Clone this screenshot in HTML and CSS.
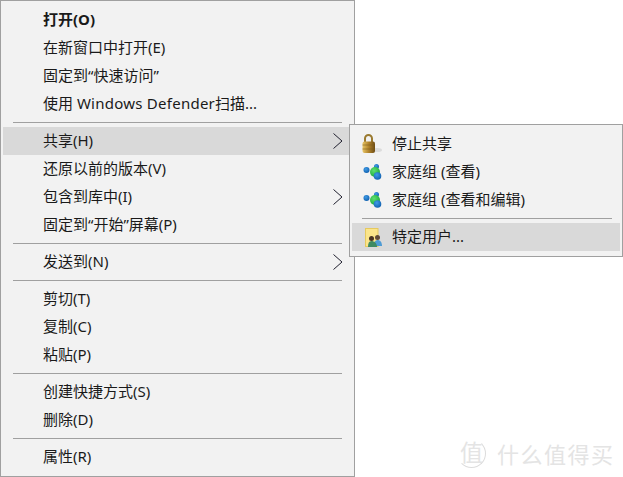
FILE: index.html
```html
<!DOCTYPE html>
<html lang="zh-CN">
<head>
    <meta charset="UTF-8">
    <title>右键菜单</title>
    <link rel="stylesheet" href="styles.css">
</head>
<body>
    <div class="menu">
        <div class="item bold">打开(O)</div>
        <div class="item">在新窗口中打开(E)</div>
        <div class="item">固定到“快速访问”</div>
        <div class="item">使用 <span class="latin">Windows Defender</span>扫描...</div>
        <div class="sep"></div>
        <div class="item active">共享(H)
            <svg class="arrow" viewBox="0 0 10 16"><path d="M.5 .5L9 8 .5 15.500" fill="none" stroke="#1f1f2e" stroke-width="1"/></svg>
        </div>
        <div class="item">还原以前的版本(V)</div>
        <div class="item">包含到库中(I)
            <svg class="arrow" viewBox="0 0 10 16"><path d="M.5 .5L9 8 .5 15.500" fill="none" stroke="#1f1f2e" stroke-width="1"/></svg>
        </div>
        <div class="item">固定到“开始”屏幕(P)</div>
        <div class="sep"></div>
        <div class="item">发送到(N)
            <svg class="arrow" viewBox="0 0 10 16"><path d="M.5 .5L9 8 .5 15.500" fill="none" stroke="#1f1f2e" stroke-width="1"/></svg>
        </div>
        <div class="sep"></div>
        <div class="item">剪切(T)</div>
        <div class="item">复制(C)</div>
        <div class="item">粘贴(P)</div>
        <div class="sep"></div>
        <div class="item">创建快捷方式(S)</div>
        <div class="item">删除(D)</div>
        <div class="sep"></div>
        <div class="item">属性(R)</div>
    </div>

    <div class="submenu">
        <div class="subitem">
            <svg class="icon" viewBox="0 0 24 24">
                <defs>
                    <linearGradient id="gold" x1="0" x2="1" y1="0" y2="0">
                        <stop offset="0" stop-color="#e8c566"/>
                        <stop offset="0.5" stop-color="#b0832c"/>
                        <stop offset="1" stop-color="#6e4c14"/>
                    </linearGradient>
                    <radialGradient id="green" cx="0.4" cy="0.35" r="0.7">
                        <stop offset="0" stop-color="#5fe070"/>
                        <stop offset="1" stop-color="#18a83a"/>
                    </radialGradient>
                    <radialGradient id="blue" cx="0.4" cy="0.35" r="0.7">
                        <stop offset="0" stop-color="#3f9be6"/>
                        <stop offset="1" stop-color="#0f5fae"/>
                    </radialGradient>
                </defs>
                <ellipse cx="16" cy="18" rx="5" ry="2" fill="#dcdcdc"/>
                <path d="M4 10V6.500a3.500 3.500 0 0 1 7 0V10" fill="none" stroke="#9a7a30" stroke-width="2"/>
                <rect x="1.500" y="9.500" width="12.500" height="11.500" rx="2" fill="url(#gold)"/>
                <path d="M1.500 13h12.500M1.500 17h12.500" stroke="#7a5a1c" stroke-width="1" opacity=".55"/>
            </svg>
            <span>停止共享</span>
        </div>
        <div class="subitem">
            <svg class="icon" viewBox="0 0 24 24">
                <circle cx="5.500" cy="10" r="3" fill="url(#blue)"/>
                <circle cx="15.500" cy="6.500" r="2.500" fill="url(#blue)"/>
                <circle cx="14" cy="12" r="5" fill="url(#green)"/>
                <circle cx="16.500" cy="16" r="3.800" fill="url(#blue)"/>
            </svg>
            <span>家庭组 (查看)</span>
        </div>
        <div class="subitem">
            <svg class="icon" viewBox="0 0 24 24">
                <circle cx="5.500" cy="10" r="3" fill="url(#blue)"/>
                <circle cx="15.500" cy="6.500" r="2.500" fill="url(#blue)"/>
                <circle cx="14" cy="12" r="5" fill="url(#green)"/>
                <circle cx="16.500" cy="16" r="3.800" fill="url(#blue)"/>
            </svg>
            <span>家庭组 (查看和编辑)</span>
        </div>
        <div class="sep sub"></div>
        <div class="subitem active">
            <svg class="icon" viewBox="0 0 24 24">
                <rect x="4.500" y="3.500" width="12.500" height="18" fill="#fbe58a" stroke="#e6c95e"/>
                <circle cx="16.500" cy="12.500" r="2.500" fill="#5f4a38"/>
                <path d="M13 21c0-4 1-6 3.500-6s4.500 2 4.500 6z" fill="#4f9bd4"/>
                <circle cx="10.500" cy="13.500" r="2.500" fill="#4a3524"/>
                <path d="M7 22c0-4 1-6 3.500-6s5.500 2 5.500 6z" fill="#3f8a62"/>
            </svg>
            <span>特定用户...</span>
        </div>
    </div>

    <div class="watermark">
        <span class="mark">值</span>
        <span class="mark-text">什么值得买</span>
    </div>
</body>
</html>
```

FILE: styles.css
```css
body {
    margin: 0;
    background: #fff;
    color: #1a1a1a;
    font-family: "Noto Sans", "Noto Sans CJK SC", sans-serif;
    font-size: 15px;
}

.menu {
    width: 349px;
    padding: 5px 2px;
    background: #f2f2f2;
    border: 1px solid #a0a0a0;
}

.item {
    position: relative;
    height: 28px;
    line-height: 26px;
    padding-left: 40px;
}

.bold {
    font-weight: bold;
}

.latin {
    letter-spacing: .25px;
}

.active {
    background: #d9d9d9;
}

.arrow {
    position: absolute;
    left: 330px;
    top: 6px;
    width: 10px;
    height: 16px;
}

.sep {
    height: 1px;
    margin: 4px 10px 4px 10px;
    background: #a0a0a0;
}

.submenu {
    position: absolute;
    left: 349px;
    top: 124px;
    width: 268px;
    padding: 5px 2px;
    background: #f2f2f2;
    border: 1px solid #a0a0a0;
}

.subitem {
    display: flex;
    align-items: center;
    height: 28px;
    line-height: 26px;
    padding-left: 9px;
}

.subitem span {
    margin-top: -2px;
}

.icon {
    width: 24px;
    height: 24px;
    margin-right: 7px;
    flex: none;
}

.sep.sub {
    margin: 4px 8px 4px 10px;
}

.watermark {
    position: absolute;
    left: 457px;
    top: 437px;
    display: flex;
    align-items: center;
    gap: 11px;
    color: #e4e4e4;
}

.mark {
    width: 27px;
    height: 27px;
    line-height: 25px;
    text-align: center;
    font-size: 23px;
    border: 1px solid transparent;
    border-right-color: #dcdcdc;
    border-bottom-color: #dcdcdc;
    border-radius: 50%;
}

.mark-text {
    font-size: 22px;
    letter-spacing: 1.500px;
}
```
